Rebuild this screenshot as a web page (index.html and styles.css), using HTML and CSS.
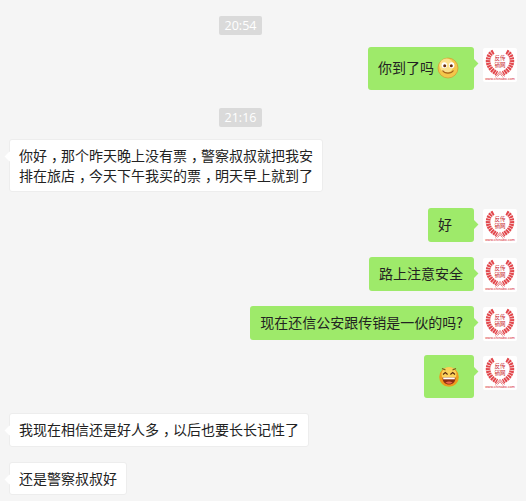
FILE: index.html
```html
<!DOCTYPE html>
<html lang="en">
<head>
    <meta charset="UTF-8">
    <meta name="viewport" content="width=device-width, initial-scale=1.0">
    <title>Chat</title>
    <link rel="stylesheet" href="styles.css">
</head>
<body>
    <svg class="defs" width="0" height="0">
        <symbol id="laurel" viewBox="0 0 34 34">
            <rect width="34" height="34" rx="2" fill="#fff"/>
            <g fill="none" stroke="#e2474c" stroke-width="4.600" stroke-dasharray="2 .6">
                <path d="M10.500 3.800C6 6 4.600 10.500 5.200 14.500 6 19.500 9.500 23 14 25.500"/>
                <path d="M23.500 3.800C28 6 29.400 10.500 28.800 14.500 28 19.500 24.500 23 20 25.500"/>
            </g>
            <path d="M12.500 28.500l4.500-5 4.500 5M14.500 28.500l2.500-3 2.500 3" fill="none" stroke="#d8343a" stroke-width=".7"/>
        </symbol>
    </svg>

    <div class="chat">
        <div class="time"><span>20:54</span></div>
        <div class="row me">
            <div class="bubble emoji-text">你到了吗
                <svg class="emoji" viewBox="0 0 24 24">
                    <circle cx="12" cy="12" r="10" fill="#f4c64a" stroke="#d49a32" stroke-width=".7"/>
                    <circle cx="10.500" cy="9.500" r="7" fill="#fbe08a"/>
                    <ellipse cx="8.300" cy="9.200" rx="2.700" ry="3" fill="#fff"/>
                    <ellipse cx="15.700" cy="9.200" rx="2.700" ry="3" fill="#fff"/>
                    <circle cx="8.700" cy="9.700" r="1.500" fill="#6a2c0c"/>
                    <circle cx="15.300" cy="9.700" r="1.500" fill="#6a2c0c"/>
                    <path d="M6.500 14.500c2.500 3.500 8.500 3.500 11 0" fill="none" stroke="#a5611a" stroke-width="1.200"/>
                </svg>
            </div>
            <svg class="avatar" viewBox="0 0 34 34">
                <use href="#laurel"/>
                <text x="17" y="12" class="av-text">反传</text>
                <text x="17" y="18.500" class="av-text">销网</text>
                <text x="17" y="32" class="av-url">www.chinabo.com</text>
            </svg>
        </div>
        <div class="time"><span>21:16</span></div>
        <div class="row them wide">
            <div class="bubble">你好<span class="comma">，</span>那个昨天晚上没有票<span class="comma">，</span>警察叔叔就把我安<br>排在旅店<span class="comma">，</span>今天下午我买的票<span class="comma">，</span>明天早上就到了</div>
        </div>
        <div class="row me">
            <div class="bubble single">好</div>
            <svg class="avatar" viewBox="0 0 34 34">
                <use href="#laurel"/>
                <text x="17" y="12" class="av-text">反传</text>
                <text x="17" y="18.500" class="av-text">销网</text>
                <text x="17" y="32" class="av-url">www.chinabo.com</text>
            </svg>
        </div>
        <div class="row me">
            <div class="bubble">路上注意安全</div>
            <svg class="avatar" viewBox="0 0 34 34">
                <use href="#laurel"/>
                <text x="17" y="12" class="av-text">反传</text>
                <text x="17" y="18.500" class="av-text">销网</text>
                <text x="17" y="32" class="av-url">www.chinabo.com</text>
            </svg>
        </div>
        <div class="row me">
            <div class="bubble">现在还信公安跟传销是一伙的吗?</div>
            <svg class="avatar" viewBox="0 0 34 34">
                <use href="#laurel"/>
                <text x="17" y="12" class="av-text">反传</text>
                <text x="17" y="18.500" class="av-text">销网</text>
                <text x="17" y="32" class="av-url">www.chinabo.com</text>
            </svg>
        </div>
        <div class="row me">
            <div class="bubble emoji-only">
                <svg class="emoji" viewBox="0 0 24 24">
                    <circle cx="12" cy="13" r="9.800" fill="#ef9a1e"/>
                    <circle cx="12" cy="10.500" r="7.500" fill="#fbd25a"/>
                    <path d="M5 4.500l3.500 1.500M19 4.500l-3.500 1.500" stroke="#7a5a18" stroke-width="1.300" fill="none"/>
                    <path d="M6 10.500l2.300-2 2.300 2M13.400 10.500l2.300-2 2.300 2" stroke="#5a2d10" stroke-width="1.200" fill="none"/>
                    <path d="M5.500 13.500h13c0 4.500-2.800 7-6.500 7s-6.500-2.500-6.500-7z" fill="#8a2d12"/>
                    <path d="M6.200 13.500h11.600v1.800H6.200z" fill="#fff"/>
                    <path d="M8.500 18.500c2-1.300 5-1.300 7 0-2 1.700-5 1.700-7 0z" fill="#ef6a4c"/>
                </svg>
            </div>
            <svg class="avatar" viewBox="0 0 34 34">
                <use href="#laurel"/>
                <text x="17" y="12" class="av-text">反传</text>
                <text x="17" y="18.500" class="av-text">销网</text>
                <text x="17" y="32" class="av-url">www.chinabo.com</text>
            </svg>
        </div>
        <div class="row them">
            <div class="bubble">我现在相信还是好人多<span class="comma">，</span>以后也要长长记性了</div>
        </div>
        <div class="row them">
            <div class="bubble">还是警察叔叔好</div>
        </div>
    </div>
</body>
</html>
```

FILE: styles.css
```css
html, body {
    margin: 0;
    height: 100%;
}
body {
    background-color: #f5f5f5;
    font-family: "Noto Sans CJK SC", "Liberation Sans", sans-serif;
    font-size: 14px;
    color: #222;
    overflow: hidden;
}
.defs {
    position: absolute;
}
.chat {
    display: flex;
    flex-direction: column;
    gap: 15px;
    padding: 13px 9px 0 9px;
}
.time {
    display: flex;
    justify-content: center;
    margin: 3px 0 -3px;
    padding-right: 45px;
}
.time span {
    background-color: #dadada;
    color: #fff;
    font-family: "Open Sans", "Liberation Sans", sans-serif;
    font-size: 12.500px;
    line-height: 19px;
    padding: 0 5.500px;
    border-radius: 2px;
}
.row {
    display: flex;
    align-items: flex-start;
}
.row.me {
    justify-content: flex-end;
    gap: 9px;
}
.row.them {
    justify-content: flex-start;
}
.row.wide {
    margin-bottom: 1px;
}
.wide .bubble {
    width: 294px;
}
.bubble {
    position: relative;
    padding: 7px 11px 7px 10px;
    line-height: 1.4;
    border-radius: 3px;
    background-color: #fff;
}
.me .bubble {
    background-color: #9eea6a;
}
.them .bubble {
    padding: 6px 9px;
    border: 1px solid #ededed;
}
.bubble::after {
    content: "";
    position: absolute;
    top: 13px;
    width: 7px;
    height: 7px;
    transform: rotate(45deg);
    background-color: inherit;
}
.me .bubble::after {
    right: -3px;
}
.them .bubble::after {
    left: -4px;
}
.comma {
    padding-left: 4px;
    letter-spacing: -4px;
}
.single {
    min-width: 25px;
}
.me .emoji-text {
    display: flex;
    align-items: center;
    gap: 2px;
    padding: 9px 14px 10px 10px;
}
.me .emoji-only {
    display: flex;
    padding: 9px 13px 10px;
}
.emoji {
    width: 24px;
    height: 24px;
}
.avatar {
    width: 34px;
    height: 34px;
    margin: 1px 0 -1px;
}
.av-text {
    fill: #c8242a;
    font-size: 5.500px;
    text-anchor: middle;
}
.av-url {
    fill: #d8262c;
    font-family: "Liberation Sans", sans-serif;
    font-size: 3.700px;
    text-anchor: middle;
}
```
